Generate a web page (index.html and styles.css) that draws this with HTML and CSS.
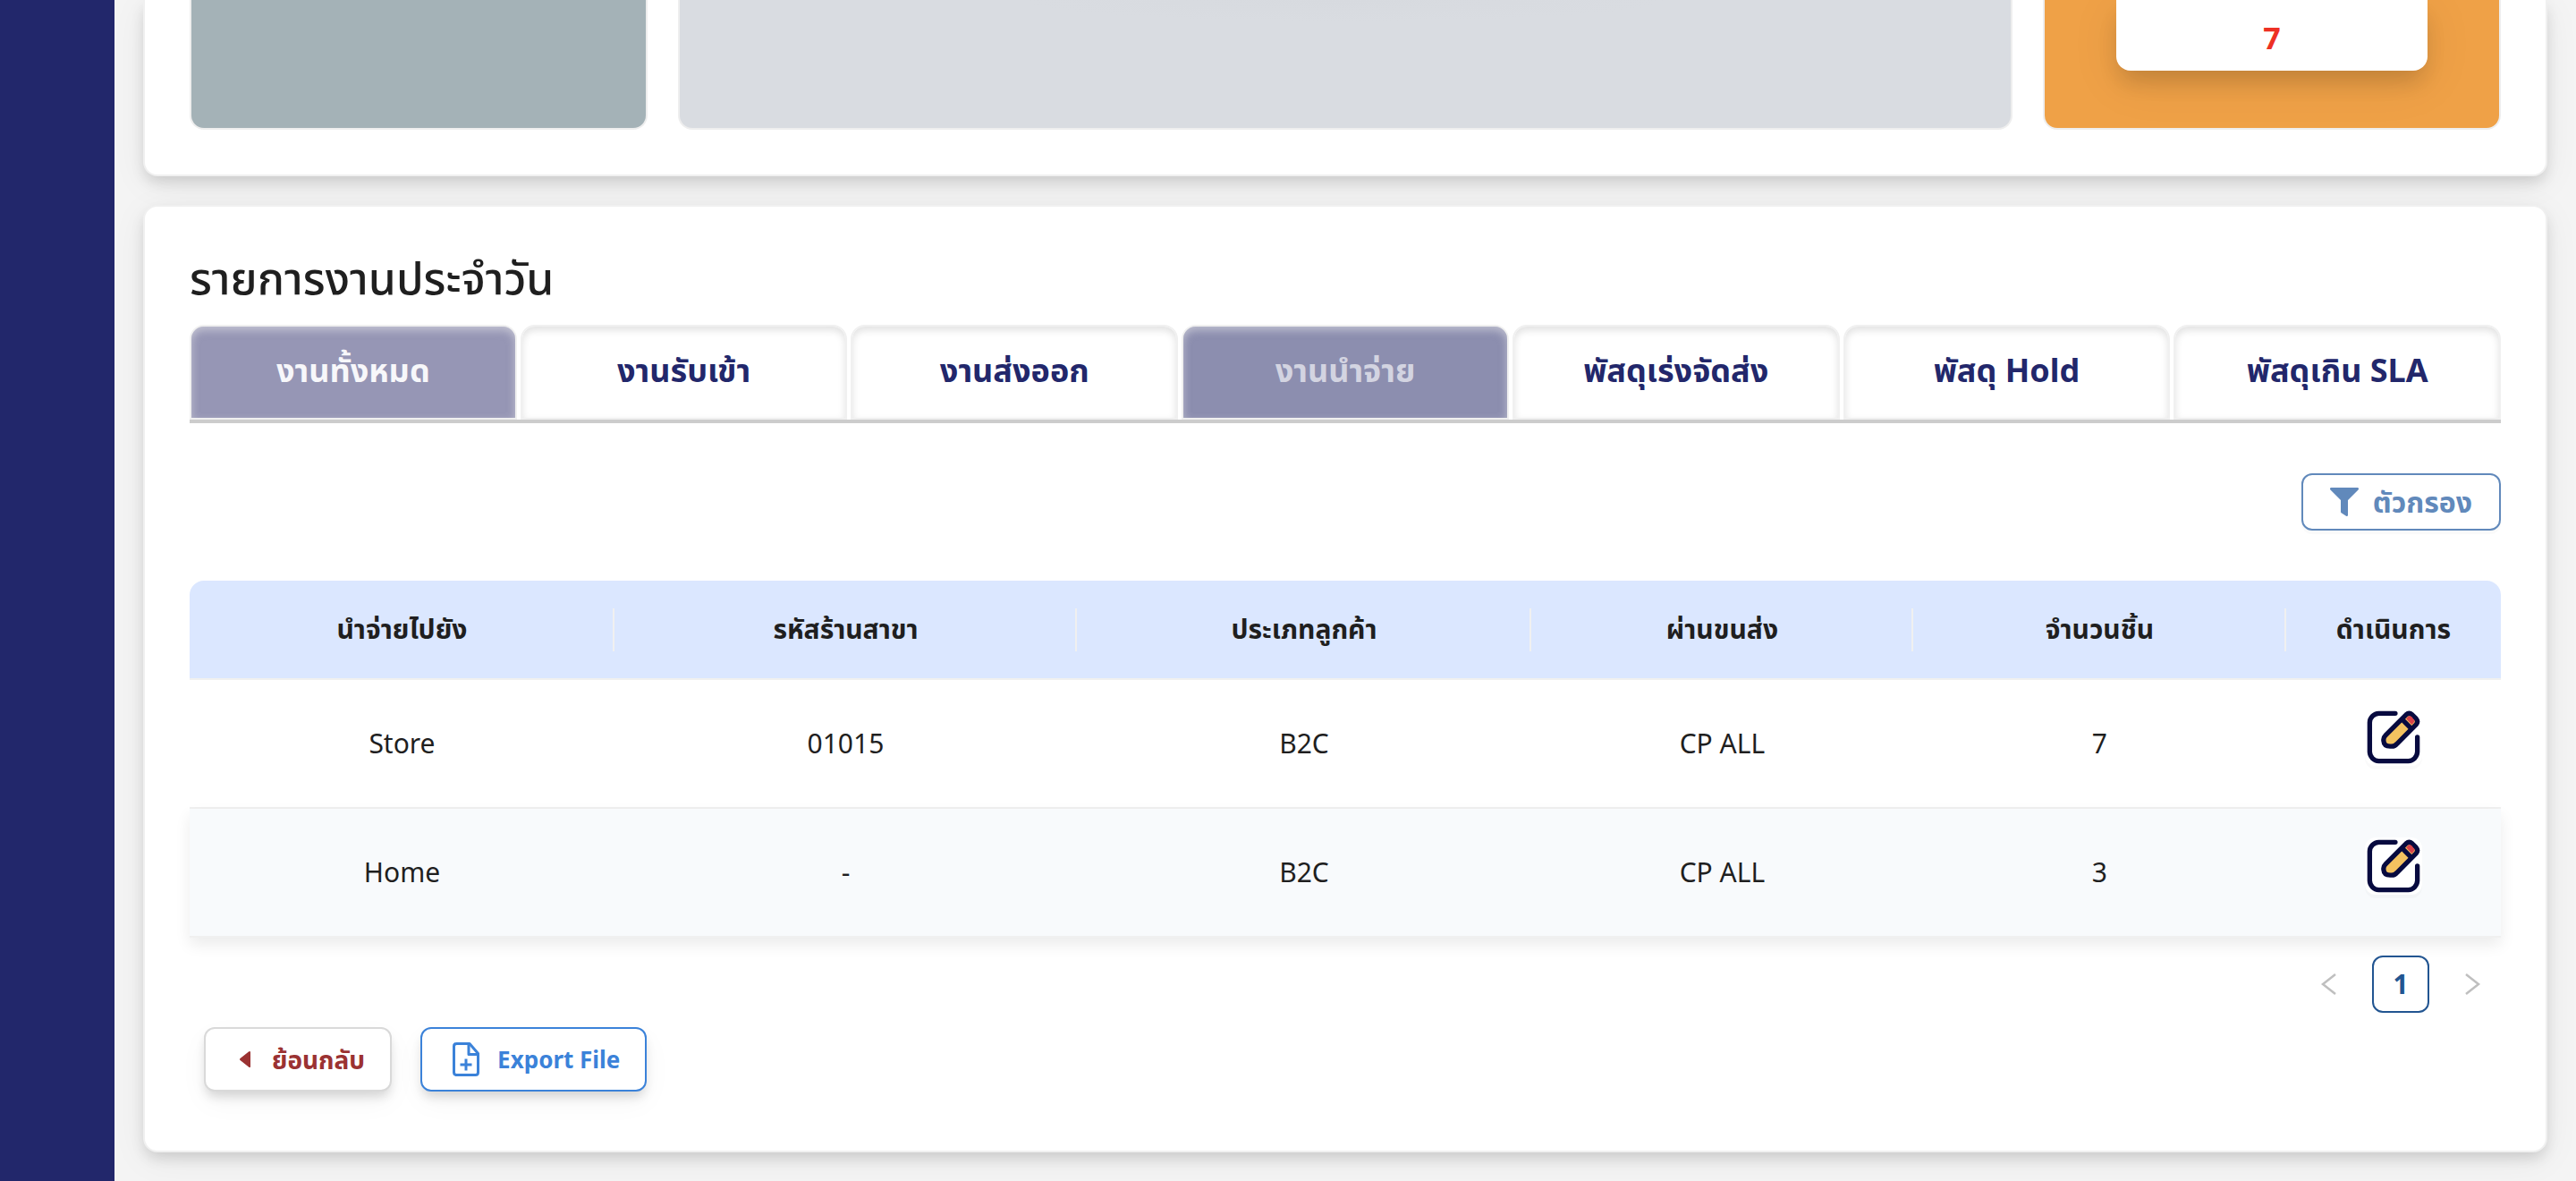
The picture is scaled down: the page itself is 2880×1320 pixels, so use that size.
FILE: index.html
```html
<!DOCTYPE html>
<html lang="th">
<head>
<meta charset="utf-8">
<meta name="viewport" content="width=device-width, initial-scale=1">
<title>รายการงานประจำวัน</title>
<link rel="stylesheet" href="styles.css">
</head>
<body>
<svg class="sprite" aria-hidden="true">
  <symbol id="icon-edit" viewBox="0 0 64 64">
    <path d="M34 4.500H15A11 11 0 0 0 4.500 15V49A11 11 0 0 0 15 59.500H49A11 11 0 0 0 59.500 49V32" fill="none" stroke="#070a3f" stroke-width="5.500" stroke-linecap="round"/>
    <path d="M23 29.500 46.500 6Q50 3 53.500 6L58 10.500Q61 14 58 17.500L36 39.500Q33.500 42.500 30 42.500H28Q21 42.500 20.500 36V34.500Q20.500 32 23 29.500Z" fill="#f3c260" stroke="#070a3f" stroke-width="5.500" stroke-linejoin="round"/>
    <path d="M46.500 10.500 49 8Q51 6.500 53 8.500L55.500 11.500Q57 13.500 55 15.500L53 17.500Z" fill="#d9444b"/>
    <path d="M41.500 11 53 22.500" stroke="#070a3f" stroke-width="5.500"/>
  </symbol>
</svg>
<div class="layout">
  <aside class="sidebar"></aside>
  <main class="main">
    <section class="card card--summary">
      <div class="tiles">
        <div class="tile tile--teal"></div>
        <div class="tile tile--grey"></div>
        <div class="tile tile--orange">
          <div class="counter">7</div>
        </div>
      </div>
    </section>
    <section class="card card--list">
      <h1 class="title">รายการงานประจำวัน</h1>
      <nav class="tabs">
        <button class="tab tab--all" type="button">งานทั้งหมด</button>
        <button class="tab" type="button">งานรับเข้า</button>
        <button class="tab" type="button">งานส่งออก</button>
        <button class="tab tab--current" type="button">งานนำจ่าย</button>
        <button class="tab" type="button">พัสดุเร่งจัดส่ง</button>
        <button class="tab" type="button">พัสดุ Hold</button>
        <button class="tab" type="button">พัสดุเกิน SLA</button>
      </nav>
      <div class="toolbar">
        <button class="btn btn--filter" type="button">
          <svg width="32" height="32" viewBox="0 0 32 32" aria-hidden="true"><path d="M1 0H31Q33 1 31.500 2.500L20 14V31Q19.500 32.500 18 31.700L13 28.500Q12 28 12 27V14L.5 2.500Q-1 1 1 0Z" fill="currentColor"/></svg>
          ตัวกรอง
        </button>
      </div>
      <table class="table">
        <colgroup>
          <col style="width:18.38%"><col style="width:20.01%"><col style="width:19.66%"><col style="width:16.52%"><col style="width:16.14%"><col style="width:9.29%">
        </colgroup>
        <thead>
          <tr><th scope="col">นำจ่ายไปยัง</th><th scope="col">รหัสร้านสาขา</th><th scope="col">ประเภทลูกค้า</th><th scope="col">ผ่านขนส่ง</th><th scope="col">จำนวนชิ้น</th><th scope="col">ดำเนินการ</th></tr>
        </thead>
        <tbody>
          <tr>
            <td>Store</td><td>01015</td><td>B2C</td><td>CP ALL</td><td>7</td>
            <td class="action"><button class="edit" type="button" aria-label="แก้ไข Store"><svg width="62" height="62" aria-hidden="true"><use href="#icon-edit"/></svg></button></td>
          </tr>
          <tr class="hovered">
            <td>Home</td><td>-</td><td>B2C</td><td>CP ALL</td><td>3</td>
            <td class="action"><button class="edit" type="button" aria-label="แก้ไข Home"><svg width="62" height="62" aria-hidden="true"><use href="#icon-edit"/></svg></button></td>
          </tr>
        </tbody>
      </table>
      <nav class="pager" aria-label="หน้า">
        <button class="page" type="button" disabled aria-label="ก่อนหน้า"><svg width="24" height="28" viewBox="0 0 24 28" aria-hidden="true"><path d="M19 3 5 14 19 25" fill="none" stroke="currentColor" stroke-width="2.500"/></svg></button>
        <button class="page page--current" type="button">1</button>
        <button class="page" type="button" disabled aria-label="ถัดไป"><svg width="24" height="28" viewBox="0 0 24 28" aria-hidden="true"><path d="M5 3 19 14 5 25" fill="none" stroke="currentColor" stroke-width="2.500"/></svg></button>
      </nav>
      <div class="actions">
        <button class="btn btn--back" type="button">
          <svg width="12" height="20" viewBox="0 0 12 20" aria-hidden="true"><path d="M12 1.500v17q-1 1-2 0L.5 11Q-.5 10 .5 9L10 1.500q1-1 2 0Z" fill="currentColor"/></svg>
          ย้อนกลับ
        </button>
        <button class="btn btn--export" type="button">
          <svg width="30" height="38" viewBox="0 0 30 38" aria-hidden="true" fill="none" stroke="currentColor" stroke-width="3" stroke-linejoin="round"><path d="M4.500 1.500H19L28.500 12.500V33.500Q28.500 36.500 25.500 36.500H4.500Q1.500 36.500 1.500 33.500V4.500Q1.500 1.500 4.500 1.500Z"/><path d="M18 2V13.500H28"/><path d="M15 18.500V31.500M8.500 25H21.500"/></svg>
          Export File
        </button>
      </div>
    </section>
  </main>
</div>
</body>
</html>
```
FILE: styles.css
```css
* { box-sizing: border-box; }

body {
  margin: 0;
  background: #f4f4f4;
  color: #1f1f1f;
  font-family: "Noto Sans", "Noto Sans Thai", sans-serif;
  font-size: 30px;
  line-height: 44px;
}

button { margin: 0; font: inherit; cursor: pointer; }
svg { display: block; flex: none; }
.sprite { position: absolute; width: 0; height: 0; }

.layout { display: flex; min-height: 100vh; }
.sidebar { flex: none; width: 128px; background: #22276b; }

.main {
  flex: 1;
  min-width: 0;
  display: flex;
  flex-direction: column;
  gap: 32px;
  padding: 0 32px 32px;
}

.card {
  padding: 50px;
  border: 2px solid #f0f0f0;
  border-radius: 16px;
  background: #fff;
  box-shadow: 0 8px 16px -2px rgba(0, 0, 0, .14), 0 8px 40px rgba(0, 0, 0, .06);
}
.card--summary { padding-top: 0; border-top: 0; border-radius: 0 0 16px 16px; }
.card--list { flex: 1; }

.tiles { display: grid; grid-template-columns: 512fr 1492fr 512fr; gap: 34px; }
.tile {
  min-height: 145px;
  border: 2px solid #eee;
  border-top: 0;
  border-radius: 0 0 16px 16px;
}
.tile--teal { background: #a4b2b7; }
.tile--grey { background: radial-gradient(ellipse 360px 24px at 50% 0, #d7dadf, #d9dce1); }
.tile--orange { padding: 0 80px 64px; background: #efa147; }

.counter {
  padding: 20px 0 15px;
  border-radius: 0 0 16px 16px;
  background: #fff;
  box-shadow: 0 16px 24px -4px rgba(0, 0, 0, .14), 0 12px 56px rgba(0, 0, 0, .08);
  color: #ed3024;
  font-size: 34px;
  font-weight: 700;
  text-align: center;
}

.title { margin: 0 0 24px; font-size: 50px; font-weight: 500; line-height: 58px; }

.tabs { display: flex; gap: 4px; border-bottom: 4px solid #ccc; }
.tab {
  flex: 1;
  height: 106px;
  padding: 0 0 4px;
  border: 2px solid #f0f0f0;
  border-radius: 16px 16px 0 0;
  background: #fff;
  box-shadow: inset 0 4px 8px rgba(0, 0, 0, .12);
  color: #22276b;
  font-size: 36px;
  font-weight: 700;
}
.tab--all,
.tab--current { box-shadow: inset 0 4px 10px rgba(240, 240, 240, .5); }
.tab--all { background: #9696b5; color: #f7f7fa; }
.tab--current { background: #8c8eaf; color: #d3d4e1; }

.btn {
  display: flex;
  align-items: center;
  border: 2px solid;
  border-radius: 12px;
  background: #fff;
  font-weight: 700;
}

.toolbar { display: flex; justify-content: flex-end; padding: 56px 0; }
.btn--filter {
  gap: 16px;
  height: 64px;
  padding: 0 30px;
  box-shadow: 0 4px 0 rgba(0, 0, 0, .02);
  color: #6189bb;
  font-size: 32px;
}

.table { width: 100%; table-layout: fixed; border-spacing: 0; text-align: center; }
.table th {
  position: relative;
  height: 111px;
  padding: 0 0 2px;
  border-bottom: 2px solid #f0f0f0;
  background: #dbe7ff;
  font-size: 30px;
  font-weight: 700;
}
.table th:first-child { border-top-left-radius: 16px; }
.table th:last-child { border-top-right-radius: 16px; }
.table th:not(:last-child)::after {
  content: "";
  position: absolute;
  top: 31px;
  right: 0;
  width: 2px;
  height: 48px;
  background: #f0f0f0;
}
.table td { height: 144px; padding: 0; border-bottom: 2px solid #f0f0f0; }
.table .action { padding-bottom: 14px; }
.hovered { background: #f8fafc; box-shadow: 0 8px 16px rgba(0, 0, 0, .08); }

.edit {
  display: block;
  width: 64px;
  height: 64px;
  margin: 0 auto;
  padding: 1px;
  border: 0;
  border-radius: 12px;
  background: #fff;
  box-shadow: 0 4px 0 rgba(0, 0, 0, .02);
}

.pager { display: flex; justify-content: flex-end; gap: 16px; margin: 20px 0 16px; }
.page {
  display: flex;
  align-items: center;
  justify-content: center;
  width: 64px;
  height: 64px;
  padding: 0;
  border: 0;
  border-radius: 12px;
  background: none;
  color: #bfbfbf;
}
.page--current { border: 2px solid #225591; background: #fff; color: #225591; font-size: 30px; font-weight: 700; }

.actions { display: flex; gap: 32px; padding: 0 16px; }
.actions .btn {
  height: 72px;
  box-shadow: 0 8px 12px -2px rgba(0, 0, 0, .14), 0 12px 32px rgba(0, 0, 0, .04);
}
.actions .btn--back { gap: 24px; padding: 0 28px 0 38px; border-color: #d9d9d9; color: #9b3232; font-size: 28px; }
.actions .btn--export { gap: 20px; padding: 0 28px 0 34px; border-color: #3b82d9; color: #3b82d9; font-size: 26px; }
```
